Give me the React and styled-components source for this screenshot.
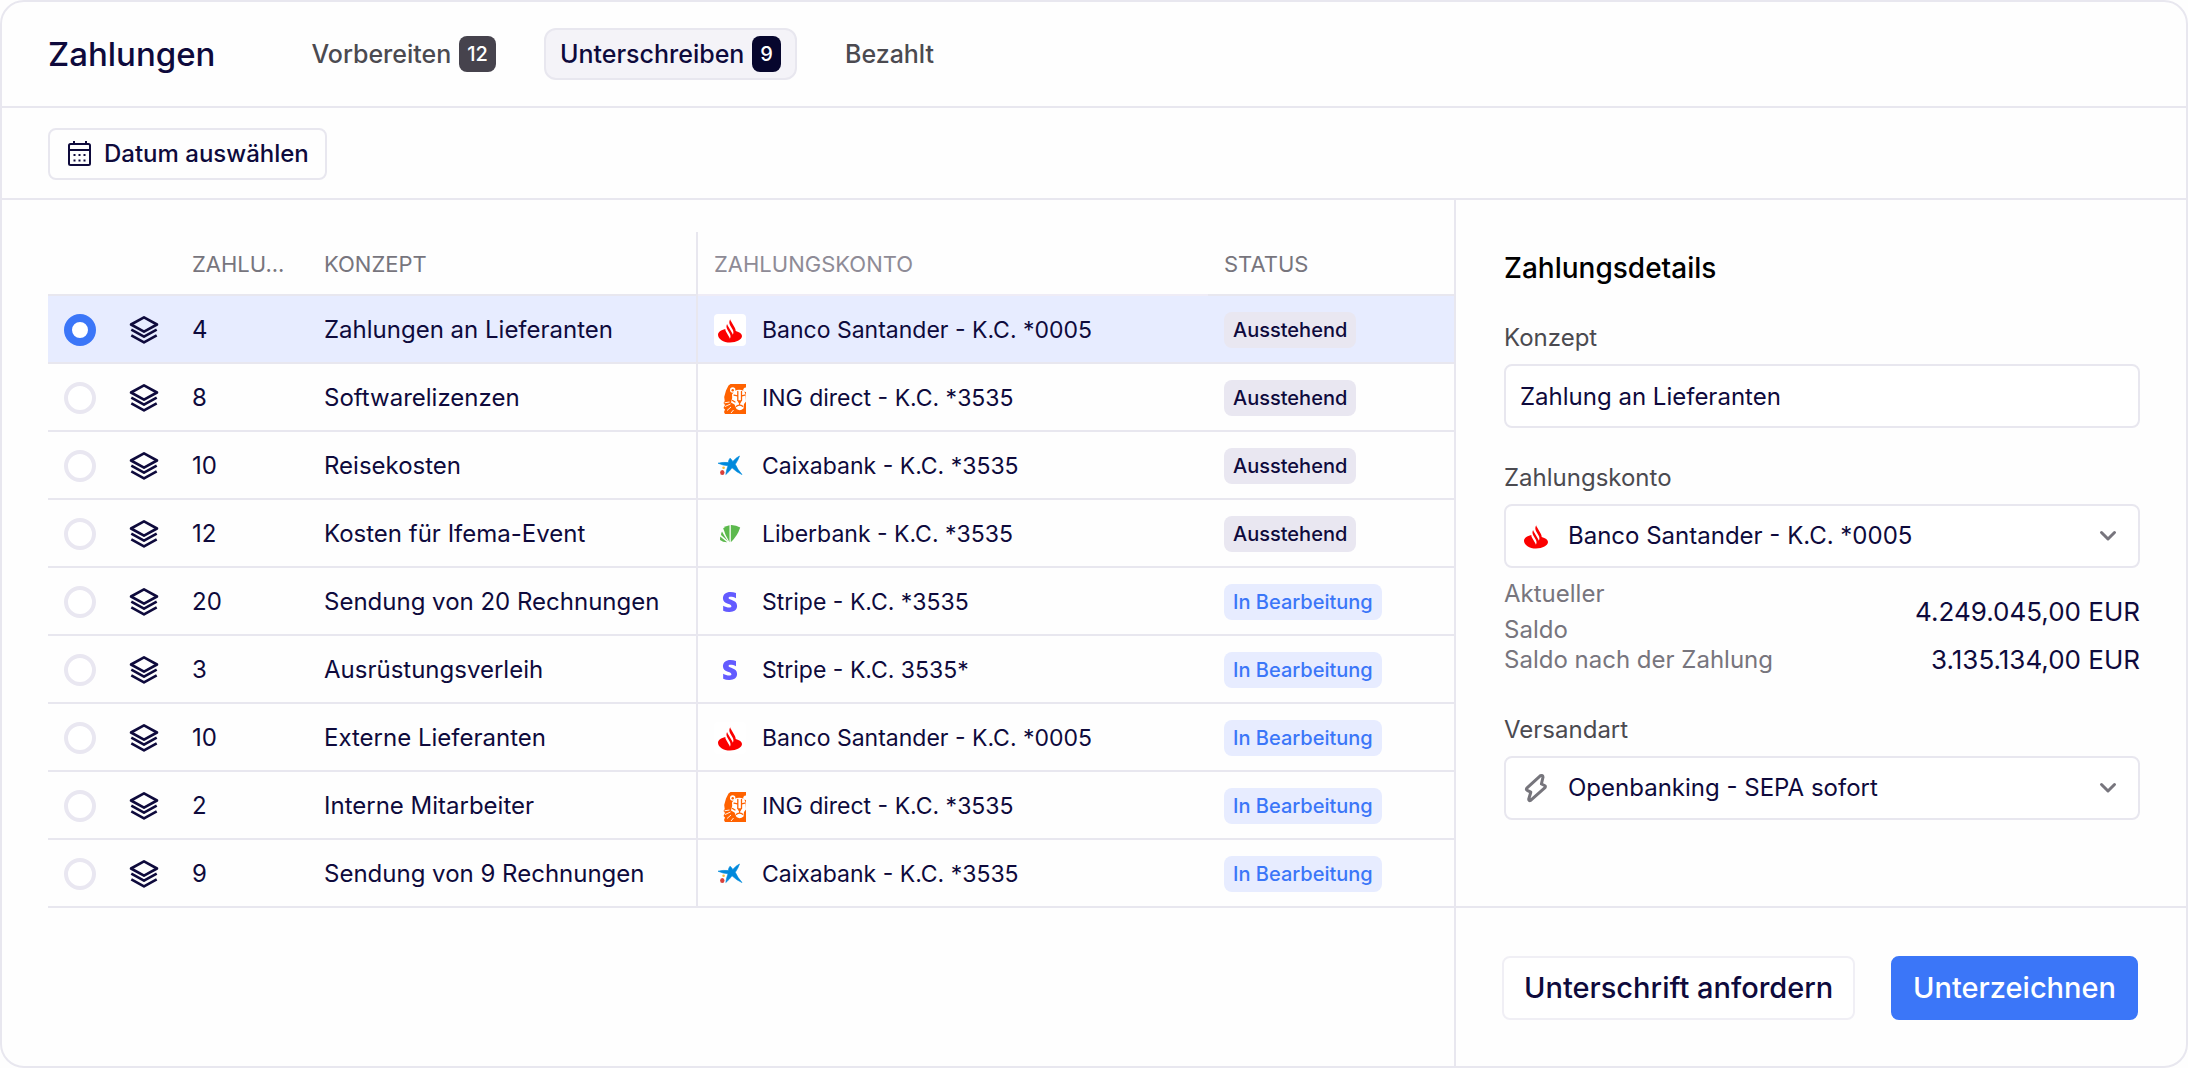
import React, { useState } from "react";
import styled, { createGlobalStyle, css } from "styled-components";
import { FaStripeS } from "react-icons/fa";

const colors = {
  ink: "#0e0a3c",
  line: "#e8e7ef",
  label: "#4b4a50",
  muted: "#77757d",
  blue: "#3b76f8",
  blueSoft: "#e7ecff",
};

const tabs = [
  { id: "prepare", label: "Vorbereiten", count: 12 },
  { id: "sign", label: "Unterschreiben", count: 9 },
  { id: "paid", label: "Bezahlt" },
];

const payments = [
  { id: 1, count: 4, concept: "Zahlungen an Lieferanten", bank: "santander", account: "Banco Santander - K.C. *0005", pending: true },
  { id: 2, count: 8, concept: "Softwarelizenzen", bank: "ing", account: "ING direct - K.C. *3535", pending: true },
  { id: 3, count: 10, concept: "Reisekosten", bank: "caixa", account: "Caixabank - K.C. *3535", pending: true },
  { id: 4, count: 12, concept: "Kosten für Ifema-Event", bank: "liber", account: "Liberbank - K.C. *3535", pending: true },
  { id: 5, count: 20, concept: "Sendung von 20 Rechnungen", bank: "stripe", account: "Stripe - K.C. *3535" },
  { id: 6, count: 3, concept: "Ausrüstungsverleih", bank: "stripe", account: "Stripe - K.C. 3535*" },
  { id: 7, count: 10, concept: "Externe Lieferanten", bank: "santander", account: "Banco Santander - K.C. *0005" },
  { id: 8, count: 2, concept: "Interne Mitarbeiter", bank: "ing", account: "ING direct - K.C. *3535" },
  { id: 9, count: 9, concept: "Sendung von 9 Rechnungen", bank: "caixa", account: "Caixabank - K.C. *3535" },
];

const CalendarIcon = () => (
  <svg width="32" height="32" viewBox="0 0 32 32" fill="none" stroke={colors.ink} strokeWidth="2" aria-hidden="true">
    <rect x="5" y="6" width="21" height="21" rx="1.5" />
    <path d="M5 12h21M10 3v4M22 3v4" />
    <path d="M9.500 17h2M14.500 17h2M19.500 17h2M9.500 22.500h2M14.500 22.500h2M19.500 22.500h2" />
  </svg>
);

const LayersIcon = () => (
  <svg width="32" height="32" viewBox="0 0 32 32" fill="none" stroke={colors.ink} strokeWidth="2.600" strokeLinejoin="round" aria-hidden="true">
    <path d="M16 3.300 29 10.500 16 17.600 3 10.500Z" />
    <path d="M3.300 15.600 16 22.600 28.700 15.600" />
    <path d="M3.300 21.300 16 28.400 28.700 21.300" />
  </svg>
);

const BoltIcon = () => (
  <svg width="32" height="32" viewBox="0 0 32 32" fill="none" stroke="#76757c" strokeWidth="3" strokeLinejoin="round" aria-hidden="true">
    <path d="M20.500 3.700 6.800 16.200Q5.800 17.500 7.200 18.300L10.800 20.200 8.700 27.200Q8.800 29.200 10.600 28.400L25 15.600Q26 14.200 24.600 13.500L21.400 12 23 5.200Q22.800 2.700 20.500 3.700Z" />
  </svg>
);

const ChevronIcon = () => (
  <svg width="20" height="20" viewBox="0 0 20 20" fill="none" stroke="#77757d" strokeWidth="3" strokeLinecap="round" strokeLinejoin="round" aria-hidden="true">
    <path d="m3.500 6.500 6.500 6.500 6.500-6.500" />
  </svg>
);

const SantanderLogo = () => (
  <svg width="32" height="32" viewBox="0 0 32 32" aria-hidden="true">
    <rect width="32" height="32" rx="4" fill="#fff" />
    <path d="M4 20.700c0-2.700 3-4.900 7.300-5.800 0 1 .3 1.900.8 2.800l3.200 5.500c.3.500.5 1 .6 1.500.9-1.600.8-3.500-.1-5l-2.600-4.500c-.9-1.700-1-3.600-.1-5.200.1.500.3 1 .6 1.500l4.500 7.800c.3.500.5 1 .6 1.500.9-1.600.8-3.500-.1-5l-2.600-4.500c-1-1.900-1.100-4 .1-6 .1.600.3 1.200.7 1.800l4 6.900c.5.900.8 2 .8 3 3.800 1 6.300 2.900 6.300 5.100 0 3.400-5.400 6.400-12 6.400s-12-3.700-12-7.800Z" fill="#fb0000" />
  </svg>
);

const IngLogo = () => (
  <svg width="32" height="32" viewBox="0 0 32 32" aria-hidden="true">
    <path
      d="M14.500 3.500 16.500 2H32V32H11L10 30 11 27.500 9.500 26 11 23 9.500 21 10.700 19 10.200 15 12 8.500Z"
      fill="#ff6200"
    />
    {/* ears and face */}
    <g fill="#fff">
      <circle cx="18.700" cy="8" r="2.700" />
      <path d="M32 5.500A2.700 2.700 0 0 0 29.500 9.500L32 10Z" />
      <path d="M20.500 9Q25 6.500 30 9L31.500 12 32 19.500 30 22 29.500 26.500Q26 29.500 22.500 27L20.500 22.500 17 20.500 18.200 16 18 12.500Z" />
    </g>
    <circle cx="18.700" cy="8.300" r="1.200" fill="#ff6200" />
    {/* eyes, nose and mouth */}
    <g fill="none" stroke="#ff6200" strokeWidth="1.300" strokeLinecap="round">
      <path d="M20 13.200l3.500.6M27.800 13.800l3-.6M23.800 9.500v9M27.500 9.500v9M25.600 20v3M22.500 24.300q3.200-2.500 6.200 0M18.500 18.500l2.500 1.500" />
    </g>
    <path d="M23.300 18.200h4.700L26.500 21h-1.800Z" fill="#ff6200" />
    <path d="M10.500 20.800l5-.8M11 24.500l5.500-2.500M13 28.500l4-3.500M17 31l2.500-3" stroke="#fff" strokeWidth=".9" fill="none" />
  </svg>
);

const CaixaLogo = () => (
  <svg width="32" height="32" viewBox="0 0 32 32" aria-hidden="true">
    <path
      d="M4 13.200Q9 12 14.300 12.500 14.500 10 16 8.200 17.500 9.300 18.800 11.400 21.500 8 25.500 6 24 10.500 21.300 14.300 23.500 19.500 28 24.600 22.500 22.200 18 17.800 15.500 21.500 11.800 24.500 12.500 19.500 14 15.700 9 15.500 4 13.200Z"
      fill="#0089dc"
      stroke="#0089dc"
      strokeWidth=".6"
      strokeLinejoin="round"
    />
    <circle cx="9.600" cy="17.800" r="1.300" fill="#f7bd3b" />
    <ellipse cx="8.300" cy="22.500" rx="2.200" ry="2.500" fill="#d9403a" />
  </svg>
);

const LiberLogo = () => (
  <svg width="32" height="32" viewBox="0 0 32 32" fill="#5cb94d" aria-hidden="true">
    <path d="M16.800 7Q22 6.800 26.200 9.500Q23.500 18 16.800 24.200Z" />
    <path d="M9.200 10.200Q12 7.800 15.500 7.200V24.200Q11 17 9.200 10.200Z" />
    <path d="M8 13.500Q10.500 18.500 14 23.300L7 17Q7 15 8 13.500Z" />
    <path d="M6.200 18.500 13.200 24.200Q9 24.300 6 22Z" />
  </svg>
);

const bankLogos = {
  santander: <SantanderLogo />,
  ing: <IngLogo />,
  caixa: <CaixaLogo />,
  liber: <LiberLogo />,
  stripe: <FaStripeS aria-hidden="true" />,
};

const App = () => {
  const [activeTab, setActiveTab] = useState("sign");
  const [selected, setSelected] = useState(1);
  const [concept, setConcept] = useState("Zahlung an Lieferanten");

  return (
    <>
      <GlobalStyle />
      <Page>
        <Header>
          <Title>Zahlungen</Title>
          <Tabs>
            {tabs.map((tab) => (
              <Tab
                key={tab.id}
                type="button"
                $active={tab.id === activeTab}
                onClick={() => setActiveTab(tab.id)}
              >
                {tab.label}
                {tab.count && (
                  <Count $active={tab.id === activeTab}>{tab.count}</Count>
                )}
              </Tab>
            ))}
          </Tabs>
        </Header>
        <Toolbar>
          <DateButton type="button">
            <CalendarIcon />
            Datum auswählen
          </DateButton>
        </Toolbar>
        <Content>
          <TablePanel>
            <Table>
              <colgroup>
                <Col $width={64} />
                <Col $width={64} />
                <Col $width={132} />
                <Col $width={390} />
                <Col />
                <Col $width={246} />
              </colgroup>
              <thead>
                <tr>
                  <HeadCell />
                  <HeadCell />
                  <HeadCell>ZAHLU...</HeadCell>
                  <HeadCell $divider>KONZEPT</HeadCell>
                  <HeadCell $light>ZAHLUNGSKONTO</HeadCell>
                  <HeadCell>STATUS</HeadCell>
                </tr>
              </thead>
              <tbody>
                {payments.map((payment) => (
                  <Row key={payment.id} $selected={payment.id === selected}>
                    <Cell>
                      <Radio
                        type="radio"
                        name="payment"
                        aria-label={payment.concept}
                        checked={payment.id === selected}
                        onChange={() => setSelected(payment.id)}
                      />
                    </Cell>
                    <Cell>
                      <LayersIcon />
                    </Cell>
                    <Cell>{payment.count}</Cell>
                    <Cell $divider>{payment.concept}</Cell>
                    <Cell>
                      <Account>
                        <BankLogo>{bankLogos[payment.bank]}</BankLogo>
                        {payment.account}
                      </Account>
                    </Cell>
                    <Cell>
                      <Status $pending={payment.pending}>
                        {payment.pending ? "Ausstehend" : "In Bearbeitung"}
                      </Status>
                    </Cell>
                  </Row>
                ))}
              </tbody>
            </Table>
          </TablePanel>
          <Details>
            <DetailsBody>
              <DetailsTitle>Zahlungsdetails</DetailsTitle>
              <Field>
                <Label htmlFor="concept">Konzept</Label>
                <TextInput
                  id="concept"
                  type="text"
                  value={concept}
                  onChange={(e) => setConcept(e.target.value)}
                />
              </Field>
              <Field>
                <Label htmlFor="account">Zahlungskonto</Label>
                <SelectBox>
                  <SantanderLogo />
                  <Select id="account">
                    <option>Banco Santander - K.C. *0005</option>
                  </Select>
                  <ChevronIcon />
                </SelectBox>
                <Balances>
                  <dt>
                    Aktueller
                    <br />
                    Saldo
                  </dt>
                  <dd>4.249.045,00 EUR</dd>
                  <dt className="after">Saldo nach der Zahlung</dt>
                  <dd className="after">3.135.134,00 EUR</dd>
                </Balances>
              </Field>
              <Field>
                <Label htmlFor="method">Versandart</Label>
                <SelectBox>
                  <BoltIcon />
                  <Select id="method">
                    <option>Openbanking - SEPA sofort</option>
                  </Select>
                  <ChevronIcon />
                </SelectBox>
              </Field>
            </DetailsBody>
            <Actions>
              <ActionButton type="button">Unterschrift anfordern</ActionButton>
              <ActionButton type="button" $primary>
                Unterzeichnen
              </ActionButton>
            </Actions>
          </Details>
        </Content>
      </Page>
    </>
  );
};

const GlobalStyle = createGlobalStyle`
  * {
    box-sizing: border-box;
  }

  body {
    margin: 0;
    background-color: #fefefe;
    color: ${colors.ink};
    font-family: Inter, "Liberation Sans", sans-serif;
    font-size: 24px;
    line-height: 32px;
  }

  button,
  input,
  select {
    font: inherit;
    color: inherit;
  }

  svg {
    display: block;
    flex-shrink: 0;
  }
`;

const Page = styled.main`
  display: flex;
  flex-direction: column;
  min-height: 100vh;
  border: 2px solid ${colors.line};
  border-radius: 24px;
`;

const Header = styled.header`
  display: flex;
  align-items: center;
  gap: 80px;
  height: 106px;
  padding: 0 46px;
  border-bottom: 2px solid ${colors.line};
`;

const Title = styled.h1`
  margin: 0;
  font-size: 33px;
  font-weight: 500;
`;

const Tabs = styled.nav`
  display: flex;
  gap: 32px;
`;

const Tab = styled.button`
  display: flex;
  align-items: center;
  gap: 8px;
  height: 52px;
  padding: 0 14px;
  border: 2px solid transparent;
  border-radius: 12px;
  background: none;
  color: ${colors.label};
  font-size: 25px;
  font-weight: 500;
  cursor: pointer;
  ${({ $active }) =>
    $active &&
    css`
      border-color: ${colors.line};
      background-color: #f4f3f8;
      color: ${colors.ink};
    `}
`;

const Count = styled.span`
  padding: 0 8px;
  border-radius: 8px;
  background-color: ${({ $active }) => ($active ? "#06062d" : "#46434d")};
  color: white;
  font-size: 20px;
  line-height: 36px;
`;

const Toolbar = styled.div`
  padding: 20px 46px 18px;
  border-bottom: 2px solid ${colors.line};
`;

const DateButton = styled.button`
  display: flex;
  align-items: center;
  gap: 8px;
  height: 52px;
  padding: 0 16px 0 14px;
  border: 2px solid ${colors.line};
  border-radius: 8px;
  background: none;
  font-weight: 500;
  cursor: pointer;
`;

const Content = styled.div`
  flex: 1;
  display: grid;
  grid-template-columns: 121fr 61fr;
`;

const TablePanel = styled.section`
  min-width: 0;
  padding: 32px 0 0 46px;
`;

const Table = styled.table`
  width: 100%;
  table-layout: fixed;
  border-collapse: separate;
  border-spacing: 0;
`;

const Col = styled.col`
  width: ${({ $width }) => ($width ? `${$width}px` : "auto")};
`;

const HeadCell = styled.th`
  height: 64px;
  padding: 2px 16px 0;
  border-bottom: 2px solid ${({ $light }) => ($light ? "#efecf6" : colors.line)};
  border-right: ${({ $divider }) =>
    $divider ? `2px solid ${colors.line}` : "none"};
  color: ${({ $light }) => ($light ? "#8e8b96" : colors.muted)};
  font-size: 22px;
  font-weight: 400;
  text-align: left;
  white-space: nowrap;
`;

const Row = styled.tr`
  background-color: ${({ $selected }) =>
    $selected ? colors.blueSoft : "transparent"};
`;

const Cell = styled.td`
  height: 68px;
  padding: 2px 16px 0;
  border-bottom: 2px solid ${colors.line};
  border-right: ${({ $divider }) =>
    $divider ? `2px solid ${colors.line}` : "none"};
  white-space: nowrap;
`;

const Radio = styled.input`
  display: block;
  appearance: none;
  width: 32px;
  height: 32px;
  margin: 0;
  border: 4px solid #e9e7f1;
  border-radius: 50%;
  background-color: white;
  cursor: pointer;

  &:checked {
    border: 8px solid ${colors.blue};
  }
`;

const Account = styled.div`
  display: flex;
  align-items: center;
  gap: 16px;
  font-size: 23px;
`;

const BankLogo = styled.span`
  display: flex;
  align-items: center;
  justify-content: center;
  width: 32px;
  height: 32px;
  color: #635bff;
  font-size: 20px;
`;

const Status = styled.span`
  display: inline-block;
  padding: 0 9px;
  border-radius: 8px;
  background-color: ${({ $pending }) => ($pending ? "#e9e7f1" : colors.blueSoft)};
  color: ${({ $pending }) => ($pending ? colors.ink : colors.blue)};
  font-size: 20px;
  font-weight: 500;
  line-height: 36px;
  vertical-align: middle;
`;

const Details = styled.aside`
  display: flex;
  flex-direction: column;
  min-width: 0;
  border-left: 2px solid ${colors.line};
`;

const DetailsBody = styled.div`
  flex: 1;
  padding: 50px 46px 32px 48px;
`;

const DetailsTitle = styled.h2`
  margin: 0 0 36px;
  color: #000;
  font-size: 28px;
  font-weight: 500;
  line-height: 36px;
`;

const Field = styled.div`
  margin-bottom: 34px;
`;

const Label = styled.label`
  display: block;
  margin-bottom: 10px;
  color: ${colors.label};
`;

const control = css`
  width: 100%;
  height: 64px;
  border: 2px solid ${colors.line};
  border-radius: 8px;
  background-color: white;
`;

const TextInput = styled.input`
  ${control}
  padding: 0 14px;
`;

const SelectBox = styled.div`
  ${control}
  display: flex;
  align-items: center;
  gap: 16px;
  padding: 0 20px 0 14px;
`;

const Select = styled.select`
  flex: 1;
  min-width: 0;
  height: 100%;
  padding: 0;
  border: none;
  outline: none;
  appearance: none;
  background: none;
`;

const Balances = styled.dl`
  display: grid;
  grid-template-columns: 1fr auto;
  align-items: center;
  margin: 8px 0 42px;

  dt {
    color: ${colors.muted};
    line-height: 36px;
  }

  dd {
    margin: 0;
    font-size: 26px;
    text-align: right;
  }

  .after {
    line-height: 24px;
  }
`;

const Actions = styled.footer`
  display: flex;
  justify-content: space-between;
  padding: 48px 48px 46px 46px;
  border-top: 2px solid ${colors.line};
`;

const ActionButton = styled.button`
  height: 64px;
  padding: 0 20px;
  border: 2px solid ${({ $primary }) => ($primary ? colors.blue : "#f0eff5")};
  border-radius: 8px;
  background-color: ${({ $primary }) => ($primary ? colors.blue : "white")};
  color: ${({ $primary }) => ($primary ? "white" : colors.ink)};
  font-size: 29px;
  font-weight: 500;
  white-space: nowrap;
  cursor: pointer;
`;

export default App;
